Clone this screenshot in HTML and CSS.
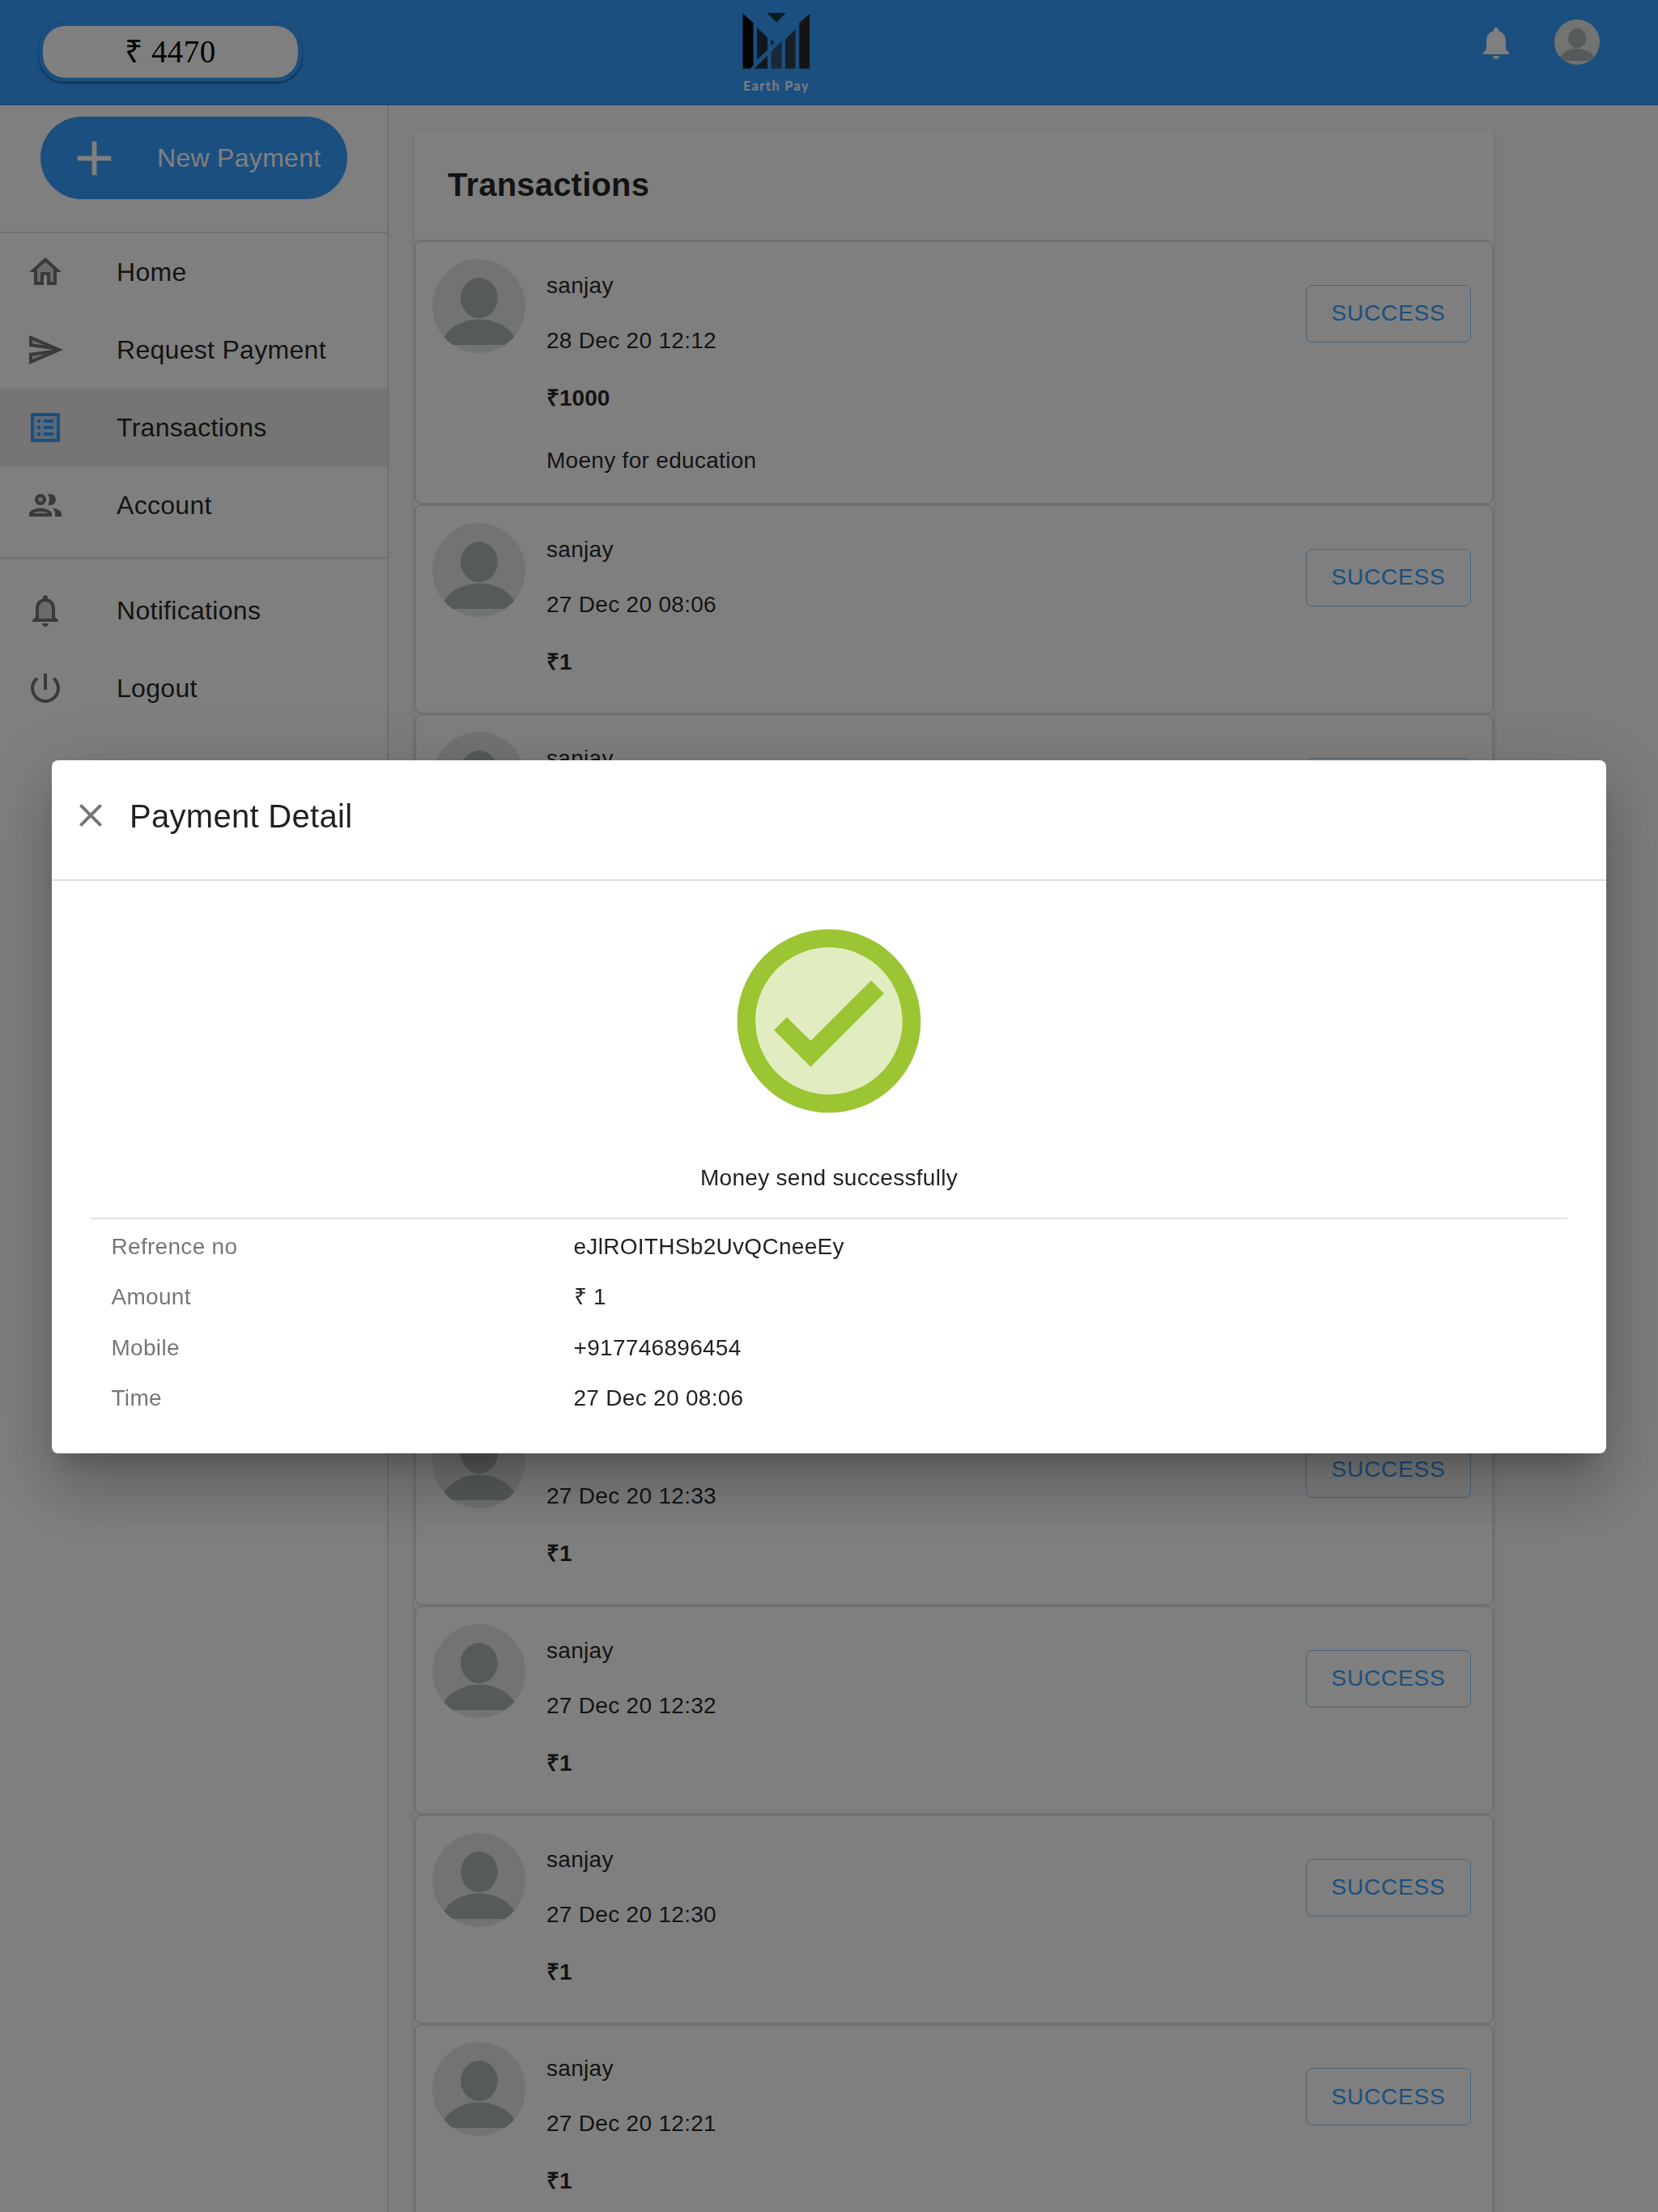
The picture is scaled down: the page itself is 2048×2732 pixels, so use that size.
FILE: index.html
```html
<!DOCTYPE html>
<html lang="en">
<head>
<meta charset="utf-8">
<title>Earth Pay</title>
<link rel="stylesheet" href="styles.css">
</head>
<body>
<svg class="defs" aria-hidden="true">
  <symbol id="avatar" viewBox="0 0 114 116" preserveAspectRatio="none">
    <rect width="114" height="116" fill="#e4e8e7"/>
    <ellipse cx="57.4" cy="48" rx="22.7" ry="25" fill="#aeb5b7"/>
    <path d="M11 106C14 88 34 74.5 57.4 74.5S101 88 104 106Z" fill="#aeb5b7"/>
  </symbol>
</svg>
<div class="app">
  <header class="topbar">
    <div class="balance">₹ 4470</div>
    <div class="logo">
      <svg class="logo-mark" viewBox="0 0 250 208">
        <path fill="#060606" d="M0 2 39 37V195L28 207H0Z"/>
        <path fill="#1a2c3e" d="M53 54 92 91V137L53 174Z"/>
        <path fill="#1f3042" d="M90 0H160L125 35Z"/>
        <path fill="#1f3448" d="M105 99 118 110 105 122Z"/>
        <path fill="#1f2f40" d="M42 207 92 159V207Z"/>
        <path fill="#34536f" d="M106 144 145 104V207H106Z"/>
        <path fill="#303f50" d="M158 99 196 61V207H158Z"/>
        <path fill="#2a2827" d="M210 38 249 2V207H210Z"/>
      </svg>
      <span class="logo-name">Earth Pay</span>
    </div>
    <div class="topbar-actions">
      <svg class="icon" viewBox="0 0 24 24"><path d="M12 22c1.1 0 2-.9 2-2h-4c0 1.1.89 2 2 2zm6-6v-5c0-3.07-1.64-5.64-4.5-6.32V4c0-.83-.67-1.5-1.5-1.5s-1.5.67-1.5 1.5v.68C7.63 5.36 6 7.92 6 11v5l-2 2v1h16v-1l-2-2z"/></svg>
      <svg class="avatar-small"><use href="#avatar"/></svg>
    </div>
  </header>
  <div class="body">
    <nav class="sidebar">
      <div class="new-wrap">
        <button class="new-payment"><svg viewBox="0 0 24 24"><path d="M19 13h-6v6h-2v-6H5v-2h6V5h2v6h6v2z"/></svg><span>New Payment</span></button>
      </div>
      <ul class="menu">
        <li class="menu-item"><svg class="icon" viewBox="0 0 24 24"><path opacity=".3" d="M7 10.19V18h2v-6h6v6h2v-7.81l-5-4.5z"/><path d="M12 3L2 12h3v8h6v-6h2v6h6v-8h3L12 3zm5 15h-2v-6H9v6H7v-7.81l5-4.5 5 4.5V18z"/></svg>Home</li>
        <li class="menu-item"><svg class="icon" viewBox="0 0 24 24"><path opacity=".3" d="M4 8.25l7.51 1-7.5-3.22zm.01 9.72l7.5-3.22-7.51 1z"/><path d="M2.01 3L2 10l15 2-15 2 .01 7L23 12 2.01 3zM4 8.25V6.03l7.51 3.22-7.51-1zm.01 9.72v-2.22l7.51-1-7.51 3.22z"/></svg>Request Payment</li>
        <li class="menu-item selected"><svg class="icon" viewBox="0 0 24 24"><path opacity=".3" d="M5 5h14v14H5z"/><path d="M11 7h6v2h-6zm0 4h6v2h-6zm0 4h6v2h-6zM7 7h2v2H7zm0 4h2v2H7zm0 4h2v2H7zM20.1 3H3.9c-.5 0-.9.4-.9.9v16.2c0 .4.4.9.9.9h16.2c.4 0 .9-.5.9-.9V3.9c0-.5-.5-.9-.9-.9zM19 19H5V5h14v14z"/></svg>Transactions</li>
        <li class="menu-item"><svg class="icon" viewBox="0 0 24 24"><path opacity=".3" d="M4.34 17h9.32c-.84-.58-2.87-1.25-4.66-1.25s-3.82.67-4.66 1.25zM9 7a1.5 1.5 0 100 3 1.5 1.5 0 000-3z"/><path d="M9 12c1.93 0 3.5-1.57 3.5-3.5S10.93 5 9 5 5.500 6.570 5.500 8.500 7.070 12 9 12zm0-5c.83 0 1.5.67 1.5 1.5S9.830 10 9 10s-1.5-.67-1.5-1.500S8.170 7 9 7zM9 13.750c-2.340 0-7 1.170-7 3.500V19h14v-1.750c0-2.330-4.660-3.500-7-3.500zM4.340 17c.840-.580 2.870-1.250 4.660-1.250s3.820.670 4.660 1.250H4.340zM16.040 13.810c1.160.840 1.960 1.960 1.960 3.440V19h4v-1.750c0-2.020-3.500-3.170-5.960-3.440zM15 12c1.930 0 3.500-1.570 3.500-3.500S16.930 5 15 5c-.540 0-1.040.130-1.500.350.630.890 1 1.980 1 3.150s-.370 2.260-1 3.150c.460.220.960.350 1.500.350z"/></svg>Account</li>
      </ul>
      <ul class="menu menu-secondary">
        <li class="menu-item"><svg class="icon" viewBox="0 0 24 24"><path opacity=".3" d="M12 6.500c-2.490 0-4 2.020-4 4.500v6h8v-6c0-2.480-1.510-4.500-4-4.500z"/><path d="M12 22c1.1 0 2-.9 2-2h-4c0 1.1.89 2 2 2zm6-6v-5c0-3.07-1.640-5.640-4.500-6.320V4c0-.83-.67-1.500-1.500-1.500s-1.500.67-1.500 1.500v.68C7.630 5.360 6 7.920 6 11v5l-2 2v1h16v-1l-2-2zm-2 1H8v-6c0-2.480 1.510-4.500 4-4.500s4 2.020 4 4.500v6z"/></svg>Notifications</li>
        <li class="menu-item"><svg class="icon" viewBox="0 0 24 24"><path d="M13 3h-2v10h2V3zm4.830 2.170l-1.420 1.420C17.990 7.860 19 9.810 19 12c0 3.870-3.130 7-7 7s-7-3.130-7-7c0-2.190 1.010-4.140 2.580-5.420L6.170 5.170C4.230 6.820 3 9.260 3 12c0 4.970 4.030 9 9 9s9-4.030 9-9c0-2.740-1.230-5.180-3.170-6.830z"/></svg>Logout</li>
      </ul>
    </nav>
    <main class="content">
      <section class="card">
        <h1 class="card-title">Transactions</h1>
        <article class="row tall">
          <svg class="avatar"><use href="#avatar"/></svg>
          <div class="info"><p class="name">sanjay</p><p class="date">28 Dec 20 12:12</p><p class="amount">₹1000</p><p class="note">Moeny for education</p></div>
          <button class="status">SUCCESS</button>
        </article>
        <article class="row">
          <svg class="avatar"><use href="#avatar"/></svg>
          <div class="info"><p class="name">sanjay</p><p class="date">27 Dec 20 08:06</p><p class="amount">₹1</p></div>
          <button class="status">SUCCESS</button>
        </article>
        <article class="row tall">
          <svg class="avatar"><use href="#avatar"/></svg>
          <div class="info"><p class="name">sanjay</p></div>
          <button class="status">SUCCESS</button>
        </article>
        <article class="row"></article>
        <article class="row"></article>
        <article class="row">
          <svg class="avatar"><use href="#avatar"/></svg>
          <div class="info"><p class="name">sanjay</p><p class="date">27 Dec 20 12:33</p><p class="amount">₹1</p></div>
          <button class="status">SUCCESS</button>
        </article>
        <article class="row">
          <svg class="avatar"><use href="#avatar"/></svg>
          <div class="info"><p class="name">sanjay</p><p class="date">27 Dec 20 12:32</p><p class="amount">₹1</p></div>
          <button class="status">SUCCESS</button>
        </article>
        <article class="row">
          <svg class="avatar"><use href="#avatar"/></svg>
          <div class="info"><p class="name">sanjay</p><p class="date">27 Dec 20 12:30</p><p class="amount">₹1</p></div>
          <button class="status">SUCCESS</button>
        </article>
        <article class="row">
          <svg class="avatar"><use href="#avatar"/></svg>
          <div class="info"><p class="name">sanjay</p><p class="date">27 Dec 20 12:21</p><p class="amount">₹1</p></div>
          <button class="status">SUCCESS</button>
        </article>
      </section>
    </main>
  </div>
</div>
<div class="backdrop">
  <div class="dialog" role="dialog">
    <div class="dialog-head">
      <svg class="icon" viewBox="0 0 24 24"><path d="M19 6.410L17.590 5 12 10.590 6.410 5 5 6.410 10.590 12 5 17.590 6.410 19 12 13.410 17.590 19 19 17.590 13.410 12z"/></svg>
      <h2>Payment Detail</h2>
    </div>
    <div class="dialog-body">
      <svg class="check" viewBox="0 0 24 24"><circle cx="12" cy="12" r="8" opacity=".3"/><path d="M12 2C6.480 2 2 6.480 2 12s4.480 10 10 10 10-4.480 10-10S17.520 2 12 2zm0 18c-4.410 0-8-3.590-8-8s3.590-8 8-8 8 3.590 8 8-3.590 8-8 8zm4.590-12.420L10 14.170l-2.590-2.580L6 13l4 4 8-8-1.410-1.420z"/></svg>
      <p class="message">Money send successfully</p>
      <dl class="details">
        <dt>Refrence no</dt><dd>eJlROITHSb2UvQCneeEy</dd>
        <dt>Amount</dt><dd>₹ 1</dd>
        <dt>Mobile</dt><dd>+917746896454</dd>
        <dt>Time</dt><dd>27 Dec 20 08:06</dd>
      </dl>
    </div>
  </div>
</div>
</body>
</html>
```
FILE: styles.css
```css
* { box-sizing: border-box; }
body, h1, h2, p, ul, dl, dd { margin: 0; padding: 0; }
body {
  height: 2732px;
  overflow: hidden;
  font-family: "Liberation Sans", Arial, sans-serif;
  font-size: 28px;
  line-height: 40px;
  letter-spacing: 0.01071em;
  color: rgba(0, 0, 0, 0.87);
}
button { font: inherit; letter-spacing: inherit; margin: 0; border: 0; }
.defs { display: block; width: 0; height: 0; }
.icon { width: 48px; height: 48px; flex: none; fill: currentColor; }

.app { height: 2732px; overflow: hidden; background: #fafafa; }
.topbar {
  display: flex;
  align-items: flex-start;
  height: 130px;
  padding: 0 72px 0 48px;
  background: #379fff;
  border-bottom: 1px solid #3082cc;
}
.balance {
  width: 325px;
  height: 74px;
  margin-top: 27px;
  border: 5px solid #379fff;
  border-radius: 32px;
  background: #fff;
  background-clip: padding-box;
  box-shadow: 0 2px 3px rgba(0, 0, 0, 0.45), 0 0 3px rgba(0, 0, 0, 0.08);
  color: #000;
  font: 39px/64px "Liberation Serif", "Times New Roman", serif;
  letter-spacing: 0.01em;
  text-align: center;
}
.logo {
  display: flex;
  flex-direction: column;
  align-items: center;
  width: 100px;
  margin: 16px 0 0 536px;
}
.logo-mark { width: 84px; height: 69px; }
.logo-name {
  margin-top: 11px;
  color: rgba(255, 255, 255, 0.94);
  font: 900 16px/20px Lato, sans-serif;
  letter-spacing: 1.5px;
  white-space: nowrap;
}
.topbar-actions { display: flex; align-items: flex-start; gap: 48px; margin: 24px 0 0 auto; color: #fff; }
.topbar-actions .icon { margin-top: 5px; }
.avatar-small { width: 56px; height: 56px; border-radius: 50%; }

.body { display: flex; height: 2602px; }
.sidebar { width: 480px; flex: none; background: #fff; border-right: 2px solid #e0e0e0; }
.new-wrap { height: 158px; padding: 14px 49px 0 50px; border-bottom: 2px solid #e0e0e0; }
.new-payment {
  display: flex;
  align-items: center;
  width: 379px;
  height: 102px;
  padding: 0 0 0 31px;
  border-radius: 51px;
  background: #379fff;
  color: #fff;
  font-size: 32px;
  letter-spacing: 0.00938em;
}
.new-payment svg { width: 71px; height: 71px; margin-right: 42px; fill: currentColor; }
.menu { list-style: none; padding-bottom: 16px; }
.menu-secondary { padding-top: 16px; border-top: 2px solid #e0e0e0; }
.menu-item {
  display: flex;
  align-items: center;
  gap: 64px;
  height: 96px;
  padding-left: 32px;
  font-size: 32px;
  letter-spacing: 0.00938em;
}
.menu-item .icon { color: rgba(0, 0, 0, 0.54); }
.selected { background: #ebebeb; }
.selected .icon { color: #379fff; }

.content { padding: 30px 0 0 32px; }
.card {
  width: 1333px;
  padding-bottom: 40px;
  border-radius: 8px;
  background: #fff;
  box-shadow: 0 4px 2px -2px rgba(0, 0, 0, 0.1), 0 2px 2px rgba(0, 0, 0, 0.1), 0 2px 6px rgba(0, 0, 0, 0.12);
}
.card-title {
  height: 137.4px;
  padding-left: 41px;
  border-bottom: 1px solid #e0e0e0;
  font-size: 40px;
  line-height: 137px;
  letter-spacing: 0.005em;
}
.row {
  display: flex;
  align-items: flex-start;
  height: 258.45px;
  padding: 20.6px 26px 0 20px;
  border: 2px solid #e0e0e0;
  border-radius: 8px;
}
.tall { height: 325.9px; }
.avatar { width: 115px; height: 116px; flex: none; border-radius: 50%; }
.info { flex: 1; padding: 13px 0 0 26px; }
.date { margin-top: 28px; }
.amount { margin-top: 31px; font-weight: bold; letter-spacing: 0; }
.note { margin-top: 37px; }
.status {
  width: 204px;
  height: 71px;
  margin-top: 32px;
  border: 1px solid #8ec6fb;
  border-radius: 8px;
  background: none;
  color: #379fff;
  letter-spacing: 0.02857em;
  text-align: center;
}

.backdrop {
  position: fixed;
  inset: 0;
  display: flex;
  align-items: center;
  justify-content: center;
  padding-top: 2px;
  background: rgba(0, 0, 0, 0.5);
}
.dialog {
  width: 1920px;
  height: 856px;
  border-radius: 8px;
  background: #fff;
  box-shadow: 0 22px 30px -14px rgba(0, 0, 0, 0.2), 0 48px 76px 6px rgba(0, 0, 0, 0.14), 0 18px 92px 16px rgba(0, 0, 0, 0.12);
}
.dialog-head {
  display: flex;
  align-items: center;
  gap: 24px;
  height: 149px;
  padding: 0 0 12px 24px;
  border-bottom: 2px solid #e0e0e0;
}
.dialog-head .icon { color: rgba(0, 0, 0, 0.54); }
.dialog-head h2 { padding-top: 2px; font-size: 40px; font-weight: normal; line-height: 64px; letter-spacing: 0.0075em; }
.dialog-body { display: flex; flex-direction: column; align-items: center; padding: 37px 48px 0; }
.check { width: 272px; height: 272px; fill: #9bc532; }
.message { margin-top: 38px; }
.details {
  display: grid;
  grid-template-columns: 571px 1fr;
  grid-auto-rows: 62.33px;
  align-items: center;
  align-self: stretch;
  margin-top: 29px;
  padding: 3px 24px 0 25.5px;
  border-top: 2px solid #e0e0e0;
}
.details dt { color: rgba(0, 0, 0, 0.54); }
```
